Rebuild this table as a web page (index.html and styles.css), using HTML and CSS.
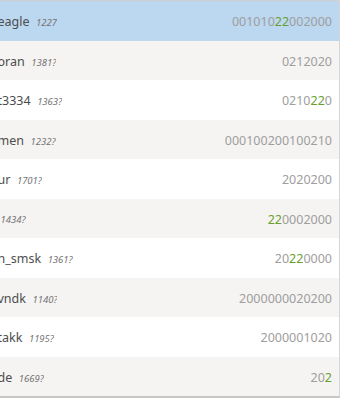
FILE: index.html
```html
<!DOCTYPE html>
<html>
<head>
<meta charset="utf-8">
<link rel="stylesheet" href="styles.css">
</head>
<body>
<div class="standings">
  <div class="row me"><span class="player"><span class="name">eagle</span><span class="rating">1227</span></span><span class="sheet">001010<em>22</em>002000</span></div>
  <div class="row"><span class="player"><span class="name">oran</span><span class="rating">1381?</span></span><span class="sheet">0212020</span></div>
  <div class="row"><span class="player"><span class="name">t3334</span><span class="rating">1363?</span></span><span class="sheet">0210<em>22</em>0</span></div>
  <div class="row"><span class="player"><span class="name">men</span><span class="rating">1232?</span></span><span class="sheet">000100200100210</span></div>
  <div class="row"><span class="player"><span class="name">ur</span><span class="rating">1701?</span></span><span class="sheet">2020200</span></div>
  <div class="row"><span class="player"><span class="name"></span><span class="rating">1434?</span></span><span class="sheet"><em>22</em>0002000</span></div>
  <div class="row"><span class="player"><span class="name">n_smsk</span><span class="rating">1361?</span></span><span class="sheet">20<em>22</em>0000</span></div>
  <div class="row"><span class="player"><span class="name">vndk</span><span class="rating">1140?</span></span><span class="sheet">2000000020200</span></div>
  <div class="row"><span class="player"><span class="name">takk</span><span class="rating">1195?</span></span><span class="sheet">2000001020</span></div>
  <div class="row"><span class="player"><span class="name">de</span><span class="rating">1669?</span></span><span class="sheet">20<em>2</em></span></div>
</div>
</body>
</html>
```
FILE: styles.css
```css
html, body {
  margin: 0;
  padding: 0;
  background: #ffffff;
}
body {
  width: 341px;
  height: 400px;
  overflow: hidden;
  font-family: "Noto Sans", "Liberation Sans", sans-serif;
}
.standings {
  width: 339px;
  border-top: 1px solid #cfcfcf;
  border-bottom: 2px solid #c6c6c6;
  border-right: 1px solid #d6d6d6;
}
.row {
  height: 39.5px;
  box-sizing: border-box;
  padding-top: 2px;
  display: flex;
  align-items: center;
  justify-content: space-between;
  background: #ffffff;
}
.row:nth-child(even) {
  background: #f5f4f2;
}
.row.me {
  background: #bcd7f0;
}
.player {
  display: flex;
  align-items: baseline;
  overflow: hidden;
  white-space: nowrap;
}
.name {
  font-size: 12.5px;
  color: #4d4d4d;
  margin-left: -2.5px;
}
.rating {
  font-size: 9.5px;
  font-style: italic;
  color: #737373;
  margin-left: 6.5px;
}
.name:empty + .rating {
  margin-left: 3px;
}
.sheet {
  font-size: 12.5px;
  color: #9e9e9e;
  padding-right: 7px;
}
.sheet em {
  font-style: normal;
  color: #6a9f2e;
}
```
